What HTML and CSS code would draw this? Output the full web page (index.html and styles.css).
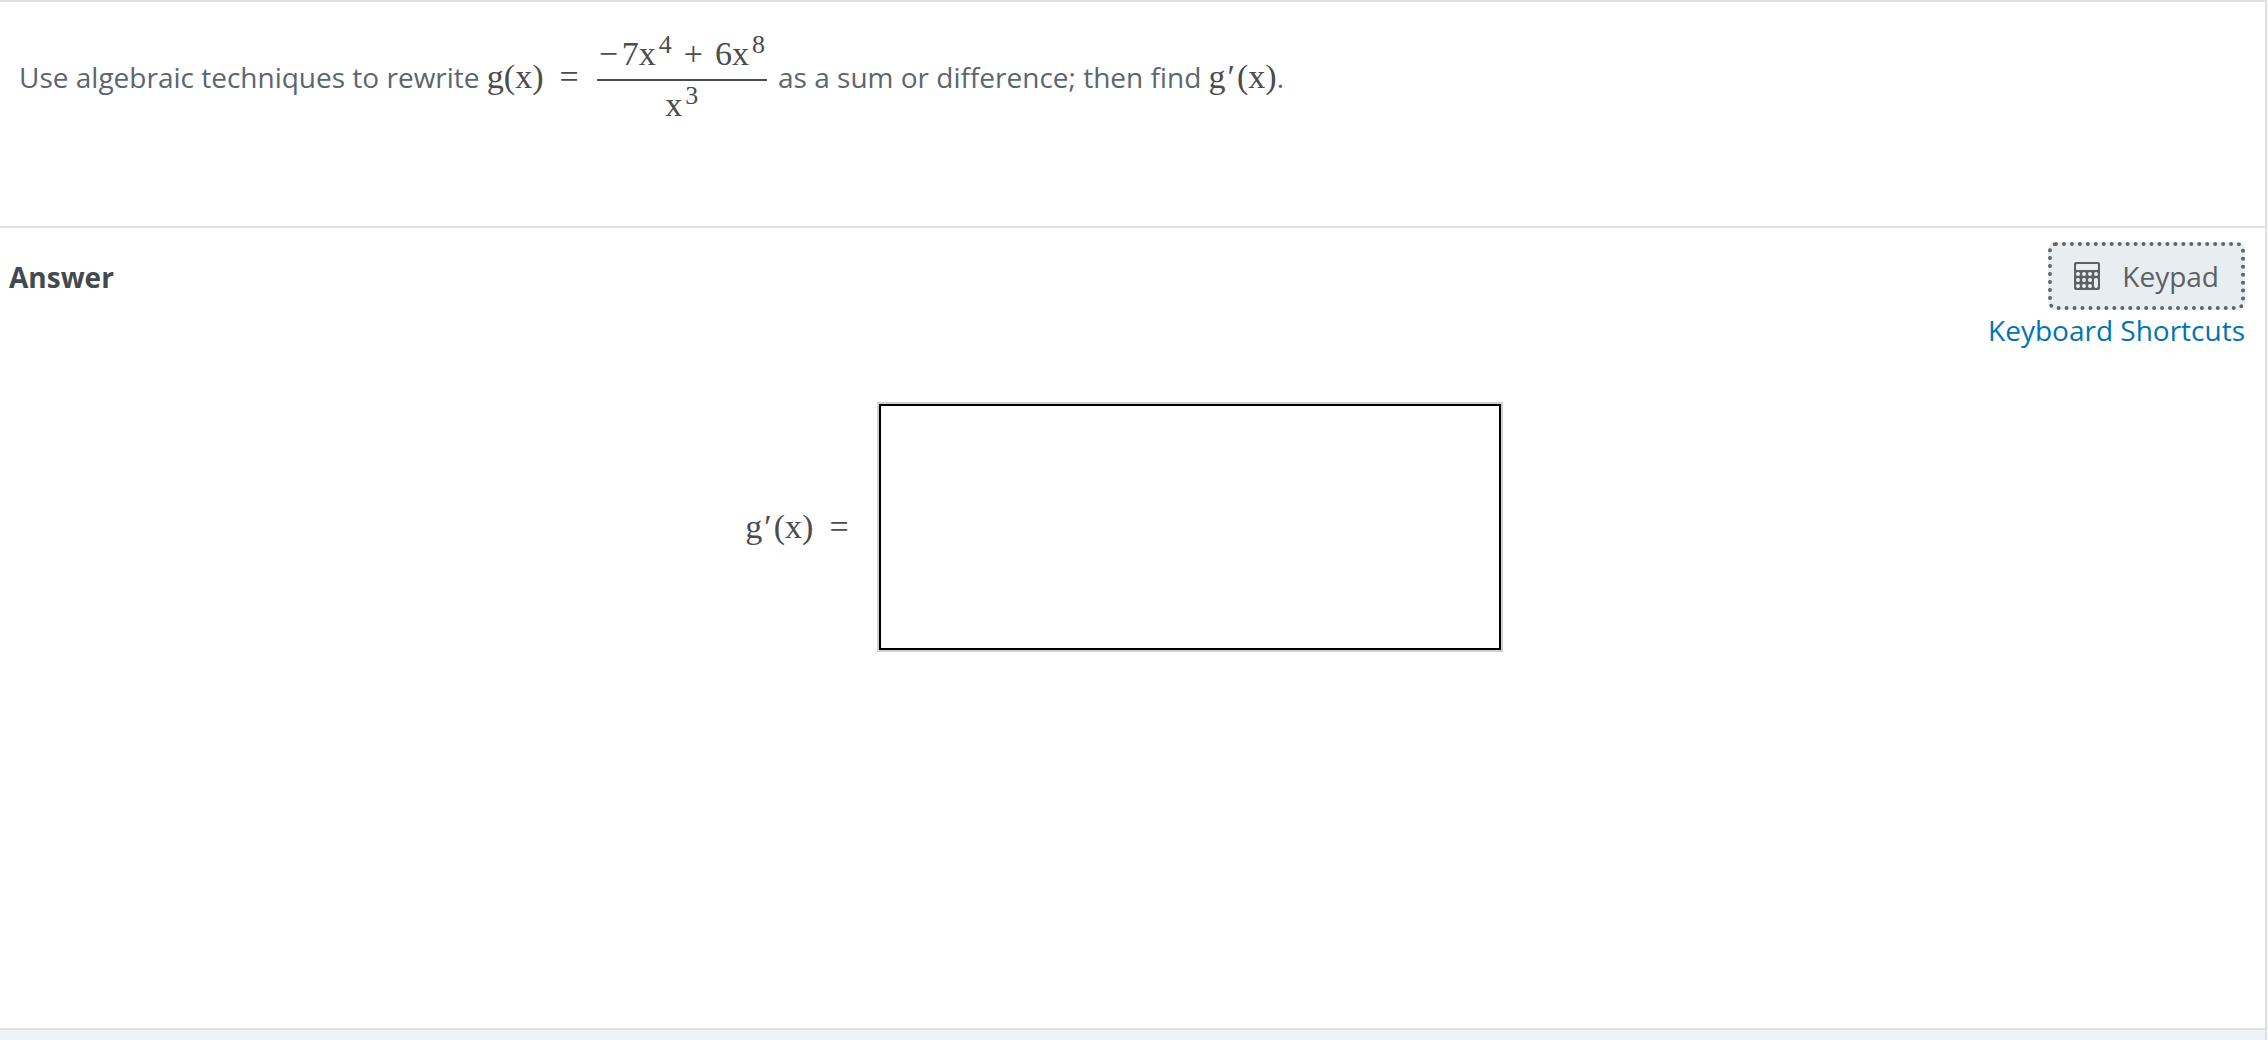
FILE: index.html
```
<!DOCTYPE html>
<html lang="en">
<head>
    <meta charset="UTF-8">
    <meta name="viewport" content="width=device-width, initial-scale=1.0">
    <title>Derivative question</title>
    <link rel="stylesheet" href="styles.css">
</head>
<body>
    <main class="page">
        <section class="question">
            <p>Use algebraic techniques to rewrite <span class="math">g(x)<span class="op">=</span></span><span class="math fraction"><span class="numerator"><span class="minus">−</span>7x<sup>4</sup><span class="op">+</span>6x<sup>8</sup></span><span class="denominator">x<sup>3</sup></span></span>as a sum or difference; then find <span class="math">g<span class="prime">′</span>(x)</span>.</p>
        </section>
        <section class="answer">
            <div class="answer-header">
                <h2>Answer</h2>
                <div class="tools">
                    <button type="button" class="keypad-button">
                        <svg width="26" height="28" viewBox="0 0 26 28" aria-hidden="true">
                            <path fill="#5d6164" fill-rule="evenodd" d="M2 0H24Q26 0 26 2V26Q26 28 24 28H2Q0 28 0 26V2Q0 0 2 0ZM3 2Q2 2 2 3V7Q2 8 3 8H23Q24 8 24 7V3Q24 2 23 2Z"/>
                            <g fill="#e7edf1">
                                <circle cx="4" cy="12" r="2"/>
                                <circle cx="10" cy="12" r="2"/>
                                <circle cx="16" cy="12" r="2"/>
                                <circle cx="22" cy="12" r="2"/>
                                <circle cx="4" cy="18" r="2"/>
                                <circle cx="10" cy="18" r="2"/>
                                <circle cx="16" cy="18" r="2"/>
                                <circle cx="4" cy="24" r="2"/>
                                <circle cx="10" cy="24" r="2"/>
                                <circle cx="16" cy="24" r="2"/>
                                <rect x="20" y="16" width="4" height="10" rx="2"/>
                            </g>
                        </svg>
                        Keypad
                    </button>
                    <a href="#shortcuts">Keyboard Shortcuts</a>
                </div>
            </div>
            <div class="answer-row">
                <label class="math" for="response">g<span class="prime">′</span>(x)<span class="op">=</span></label>
                <textarea id="response" class="response"></textarea>
            </div>
        </section>
        <footer class="footer"></footer>
    </main>
</body>
</html>
```
FILE: styles.css
```
* {
    box-sizing: border-box;
}

body {
    margin: 0;
    background: #f8f8f8;
    color: #5c666f;
    font-family: "Open Sans", sans-serif;
    font-size: 28px;
    line-height: 40px;
}

.page {
    display: flex;
    flex-direction: column;
    min-height: 100vh;
    margin-right: 1px;
    background: #fff;
    border-top: 2px solid #e0e0e0;
    border-right: 2px solid #e0e0e0;
}

.question {
    min-height: 226px;
    padding: 32px 19px;
    border-bottom: 2px solid #e0e0e0;
}

.question p {
    margin: 0;
}

/* math */
.math {
    color: #4c4c4c;
    font-family: "Liberation Serif", serif;
    font-size: 34px;
    line-height: 40px;
}

.math sup {
    margin-left: 3px;
    font-size: 26px;
    line-height: 0;
    vertical-align: 12px;
}

.op {
    margin: 0 12px;
}

.math > .op {
    margin: 0 18px 0 16px;
}

.numerator .op {
    margin: 0 12px;
}

.minus {
    margin-right: 4px;
}

.prime {
    margin: 0 2px;
}

.fraction {
    display: inline-flex;
    flex-direction: column;
    margin-right: 11px;
    text-align: center;
    vertical-align: middle;
}

.numerator {
    padding: 0 2px 5px;
    border-bottom: 2px solid #4c4c4c;
}

.denominator {
    padding: 4px 0 1px;
}

/* answer area */
.answer {
    flex: 1;
    padding: 14px 20px 40px 9px;
}

.answer-header {
    display: flex;
    justify-content: space-between;
}

.answer-header h2 {
    margin: 15px 0 0;
    color: #44494f;
    font-size: 28px;
    font-weight: 700;
}

.tools {
    display: flex;
    flex-direction: column;
    align-items: flex-end;
}

.keypad-button {
    display: flex;
    align-items: center;
    gap: 22px;
    height: 68px;
    padding: 0 22px;
    background: #e7edf1;
    border: 4px dotted #5c666b;
    border-radius: 8px;
    color: #5d6164;
    font: inherit;
    cursor: pointer;
}

.tools a {
    color: #0074b3;
    text-decoration: none;
}

.answer-row {
    display: flex;
    justify-content: center;
    align-items: center;
    margin-top: 52px;
    padding-right: 6px;
}

.response {
    width: 626px;
    height: 250px;
    margin-left: 10px;
    padding: 8px;
    border: 2px solid #d0d0d0;
    outline: 2px solid #000;
    outline-offset: -4px;
    font: inherit;
    resize: none;
}

.footer {
    height: 12px;
    background: #eff3f7;
    border-top: 2px solid #e0e0e0;
}
```
